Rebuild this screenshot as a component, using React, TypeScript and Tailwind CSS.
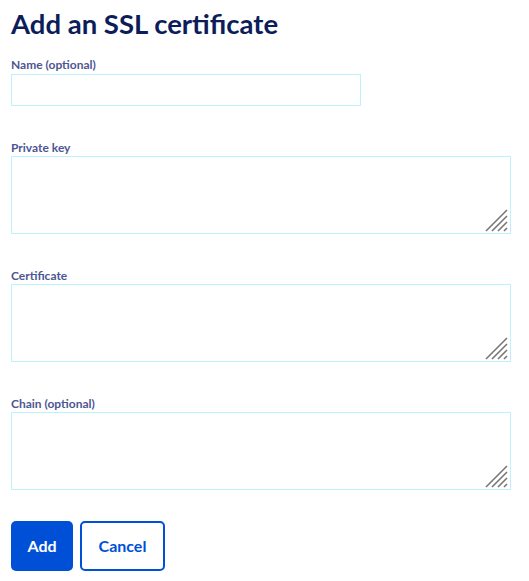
const fields = [
  { label: 'Private key' },
  { label: 'Certificate' },
  { label: 'Chain (optional)' },
]

const Grip = () => (
  <svg className="pointer-events-none absolute right-[3px] bottom-[2px]" width="23" height="23" viewBox="0 0 23 23">
    <g stroke="#767676" strokeWidth="1.6">
      <line x1="1" y1="22" x2="22" y2="1" />
      <line x1="7" y1="22" x2="22" y2="7" />
      <line x1="13" y1="22" x2="22" y2="13" />
      <line x1="19" y1="22" x2="22" y2="19" />
    </g>
  </svg>
)

export default function App() {
  return (
    <div className="min-h-screen bg-white pl-[11px] pr-[18px] pt-[5px] font-['Lato','Open_Sans',sans-serif]">
      <h1 className="text-[27.5px] font-bold leading-[38px] text-[#0c1d5a]">Add an SSL certificate</h1>

      <form className="mt-[14px]">
        <div className="mb-[34px]">
          <label className="block text-[12px] font-bold leading-[15px] text-[#4d5693] mb-[2px]">Name (optional)</label>
          <input type="text" className="block w-[350px] h-[32px] border border-[#bef1ff] outline-none px-2" />
        </div>

        {fields.map((f) => (
          <div key={f.label} className="mb-[34px]">
            <label className="block text-[12px] font-bold leading-[15px] text-[#4d5693] mb-[1px]">{f.label}</label>
            <div className="relative">
              <textarea className="block w-full h-[78px] resize-none border border-[#bef1ff] outline-none p-2" />
              <Grip />
            </div>
          </div>
        ))}

        <div className="flex gap-[7px] -mt-[3px]">
          <button type="button" className="h-[50px] w-[62px] rounded-[5px] bg-[#0050d7] text-[16px] font-bold text-white">Add</button>
          <button type="button" className="h-[50px] w-[85px] rounded-[5px] border-2 border-[#0050d7] bg-white text-[16px] font-bold text-[#0050d7]">Cancel</button>
        </div>
      </form>
    </div>
  )
}
